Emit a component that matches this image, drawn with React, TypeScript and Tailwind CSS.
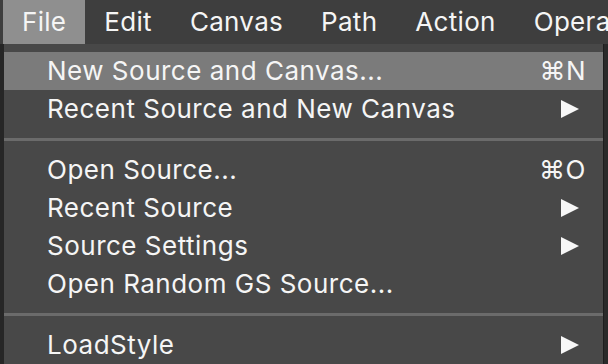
import React from "react";

type Item =
    | { kind: "item"; label: string; shortcut?: string; submenu?: boolean; active?: boolean }
    | { kind: "sep" };

const menus = ["File", "Edit", "Canvas", "Path", "Action", "Operations"];

const items: Item[] = [
    { kind: "item", label: "New Source and Canvas...", shortcut: "⌘N", active: true },
    { kind: "item", label: "Recent Source and New Canvas", submenu: true },
    { kind: "sep" },
    { kind: "item", label: "Open Source...", shortcut: "⌘O" },
    { kind: "item", label: "Recent Source", submenu: true },
    { kind: "item", label: "Source Settings", submenu: true },
    { kind: "item", label: "Open Random GS Source..." },
    { kind: "sep" },
    { kind: "item", label: "LoadStyle", submenu: true },
];

function Arrow() {
    return (
        <svg width="18" height="18" viewBox="0 0 18 18" className="shrink-0">
            <path d="M0 0 L18 9 L0 18 Z" fill="#f7f7f7" />
        </svg>
    );
}

export default function App() {
    return (
        <div className="w-[608px] h-[364px] overflow-hidden bg-[#2a2a2a] flex flex-col font-['Inter',sans-serif] text-[#f5f5f5]">
            {/* menu bar */}
            <div className="h-[44px] shrink-0 bg-[#3e3e3e] flex items-stretch pl-[3px] whitespace-nowrap overflow-hidden">
                {menus.map((m) => (
                    <div
                        key={m}
                        className={
                            "px-[19px] flex items-center text-[26px] tracking-[0.3px] leading-none " +
                            (m === "File" ? "bg-[#8f8f8f]" : "")
                        }
                    >
                        {m}
                    </div>
                ))}
            </div>

            <div className="flex flex-1 min-h-0">
                <div className="w-[4px] shrink-0 bg-[#262626]" />
                {/* dropdown */}
                <div className="w-[600px] shrink-0 bg-[#484848] pt-[8px] border-r border-[#1e1e1e]">
                    {items.map((it, i) =>
                        it.kind === "sep" ? (
                            <div key={i} className="h-[23px] flex items-center">
                                <div className="h-[3px] w-full bg-[#6b6b6b]" />
                            </div>
                        ) : (
                            <div
                                key={i}
                                className={
                                    "h-[38px] flex items-center pl-[43px] text-[26px] tracking-[0.5px] leading-none whitespace-nowrap " +
                                    (it.active ? "bg-[#7b7b7b] pr-[17px]" : it.shortcut ? "pr-[17px]" : "pr-[24px]")
                                }
                            >
                                <span className="flex-1">{it.label}</span>
                                {it.shortcut && <span>{it.shortcut}</span>}
                                {it.submenu && <Arrow />}
                            </div>
                        )
                    )}
                </div>
                <div className="flex-1 bg-[#2a2a2a]" />
            </div>
        </div>
    );
}
